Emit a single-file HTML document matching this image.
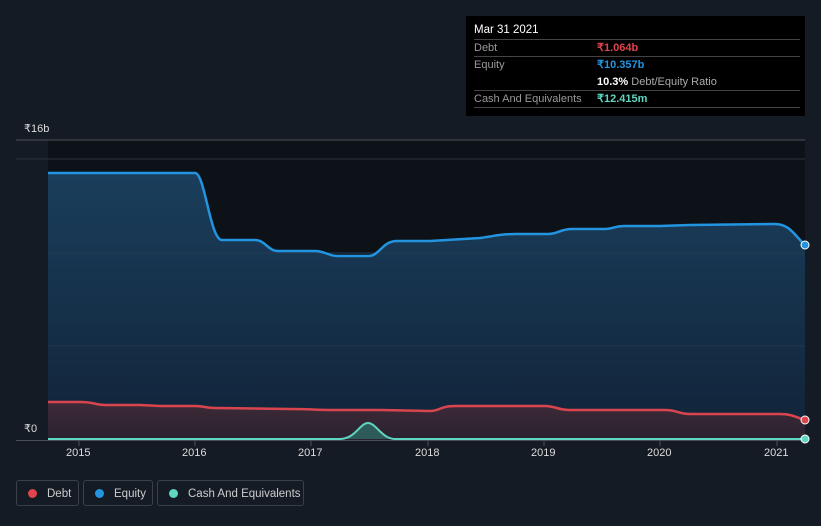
<!DOCTYPE html>
<html><head><meta charset="utf-8"><style>
body{margin:0;width:821px;height:526px;background:#151b25;font-family:"Liberation Sans",sans-serif;overflow:hidden;position:relative}
.tt{position:absolute;left:466px;top:16px;width:339px;height:100px;background:#000;color:#fff;font-size:11px}
.row{position:absolute;left:8px;width:326px;border-top:1px solid #444;height:16px;line-height:16px}
.lab{color:#999;position:absolute;left:0}
.val{position:absolute;left:123px;font-weight:bold}
.leg{position:absolute;top:480px;height:26px;border:1px solid #3a404a;border-radius:3px;color:#ccc;font-size:11.5px;line-height:26px;box-sizing:border-box;white-space:nowrap;overflow:hidden}
.dot{display:inline-block;width:9px;height:9px;border-radius:50%;margin:0 10px 0 11px;vertical-align:-1px}
.ax{position:absolute;color:#ddd;font-size:11px}
</style></head><body>
<svg width="821" height="526" style="position:absolute;left:0;top:0">
<defs>
<linearGradient id="eg" x1="0" y1="0" x2="0" y2="1"><stop offset="0" stop-color="#1a3e5c"/><stop offset="1" stop-color="#112338"/></linearGradient>
<linearGradient id="dg" x1="0" y1="0" x2="0" y2="1"><stop offset="0" stop-color="#3e2a38"/><stop offset="1" stop-color="#2a2230"/></linearGradient>
</defs>
<rect x="48" y="140" width="757" height="300" fill="#0d1118"/>
<line x1="16" y1="140" x2="805" y2="140" stroke="#4a4f57"/>
<line x1="16" y1="159" x2="805" y2="159" stroke="#2c323b"/>
<path d="M48,173 L195,173 C205,173 210,240 222,240 L255,240 C265,240 268,251 278,251 L315,251 C325,251 328,256 338,256 L368,256 C380,256 382,241 397,241 L430,241 L480,238 C495,236 500,234 515,234 L548,234 C558,234 560,229 572,229 L605,229 C612,229 615,226 625,226 L660,226 L690,225 L775,224 C790,224 795,236 805,245 L805,440 L48,440Z" fill="url(#eg)"/>
<line x1="48" y1="253" x2="805" y2="253" stroke="#243b52" />
<line x1="48" y1="346" x2="805" y2="346" stroke="#213750"/>
<path d="M48,173 L195,173 C205,173 210,240 222,240 L255,240 C265,240 268,251 278,251 L315,251 C325,251 328,256 338,256 L368,256 C380,256 382,241 397,241 L430,241 L480,238 C495,236 500,234 515,234 L548,234 C558,234 560,229 572,229 L605,229 C612,229 615,226 625,226 L660,226 L690,225 L775,224 C790,224 795,236 805,245" fill="none" stroke="#2394e0" stroke-width="2.5"/>
<path d="M48,402 L80,402 C95,402 95,405 105,405 L140,405 L160,406 L195,406 C205,406 205,408 215,408 L290,409 C310,409 315,410 330,410 L380,410 L430,411 C440,411 440,406 455,406 L545,406 C555,406 558,410 570,410 L665,410 C678,410 678,414 690,414 L780,414 C792,414 795,417 805,420 L805,440 L48,440Z" fill="url(#dg)"/>
<path d="M48,402 L80,402 C95,402 95,405 105,405 L140,405 L160,406 L195,406 C205,406 205,408 215,408 L290,409 C310,409 315,410 330,410 L380,410 L430,411 C440,411 440,406 455,406 L545,406 C555,406 558,410 570,410 L665,410 C678,410 678,414 690,414 L780,414 C792,414 795,417 805,420" fill="none" stroke="#d9454f" stroke-width="2.5"/>
<path d="M340,439 C355,439 360,423 368,423 C376,423 382,439 395,439Z" fill="#2f5a5a"/>
<path d="M48,439 L340,439 C355,439 360,423 368,423 C376,423 382,439 395,439 L805,439" fill="none" stroke="#5fd6c2" stroke-width="2"/>
<line x1="16" y1="440.5" x2="805" y2="440.5" stroke="#4a4f57"/>
<g stroke="#4a4f57"><line x1="79" y1="441" x2="79" y2="446"/><line x1="195" y1="441" x2="195" y2="446"/><line x1="311" y1="441" x2="311" y2="446"/><line x1="428" y1="441" x2="428" y2="446"/><line x1="544" y1="441" x2="544" y2="446"/><line x1="660" y1="441" x2="660" y2="446"/><line x1="777" y1="441" x2="777" y2="446"/></g>
<circle cx="805" cy="245" r="4" fill="#2394e0" stroke="#fff" stroke-width="1"/>
<circle cx="805" cy="420" r="4" fill="#d9454f" stroke="#fff" stroke-width="1"/>
<circle cx="805" cy="439" r="4" fill="#5fd6c2" stroke="#fff" stroke-width="1"/>
</svg>
<div class="ax" style="left:24px;top:122px">₹16b</div>
<div class="ax" style="left:24px;top:422px">₹0</div>
<div class="ax" style="left:66px;top:447px">2015</div>
<div class="ax" style="left:182px;top:447px">2016</div>
<div class="ax" style="left:298px;top:447px">2017</div>
<div class="ax" style="left:415px;top:447px">2018</div>
<div class="ax" style="left:531px;top:447px">2019</div>
<div class="ax" style="left:647px;top:447px">2020</div>
<div class="ax" style="left:764px;top:447px">2021</div>
<div class="tt">
<div style="position:absolute;left:8px;top:8px;font-size:11.5px">Mar 31 2021</div>
<div class="row" style="top:23px"><span class="lab">Debt</span><span class="val" style="color:#e0444c">₹1.064b</span></div>
<div class="row" style="top:40px;height:33px"><span class="lab">Equity</span><span class="val" style="color:#2394e0">₹10.357b</span><span style="position:absolute;left:123px;top:17px"><b>10.3%</b> <span style="color:#aaa">Debt/Equity Ratio</span></span></div>
<div class="row" style="top:74px;border-bottom:1px solid #444"><span class="lab">Cash And Equivalents</span><span class="val" style="color:#5fd6c2">₹12.415m</span></div>
</div>
<div class="leg" style="left:16px;width:63px"><span class="dot" style="background:#e0444c"></span>Debt</div>
<div class="leg" style="left:83px;width:70px"><span class="dot" style="background:#2394e0"></span>Equity</div>
<div class="leg" style="left:157px;width:147px"><span class="dot" style="background:#5fd6c2"></span>Cash And Equivalents</div>
</body></html>
